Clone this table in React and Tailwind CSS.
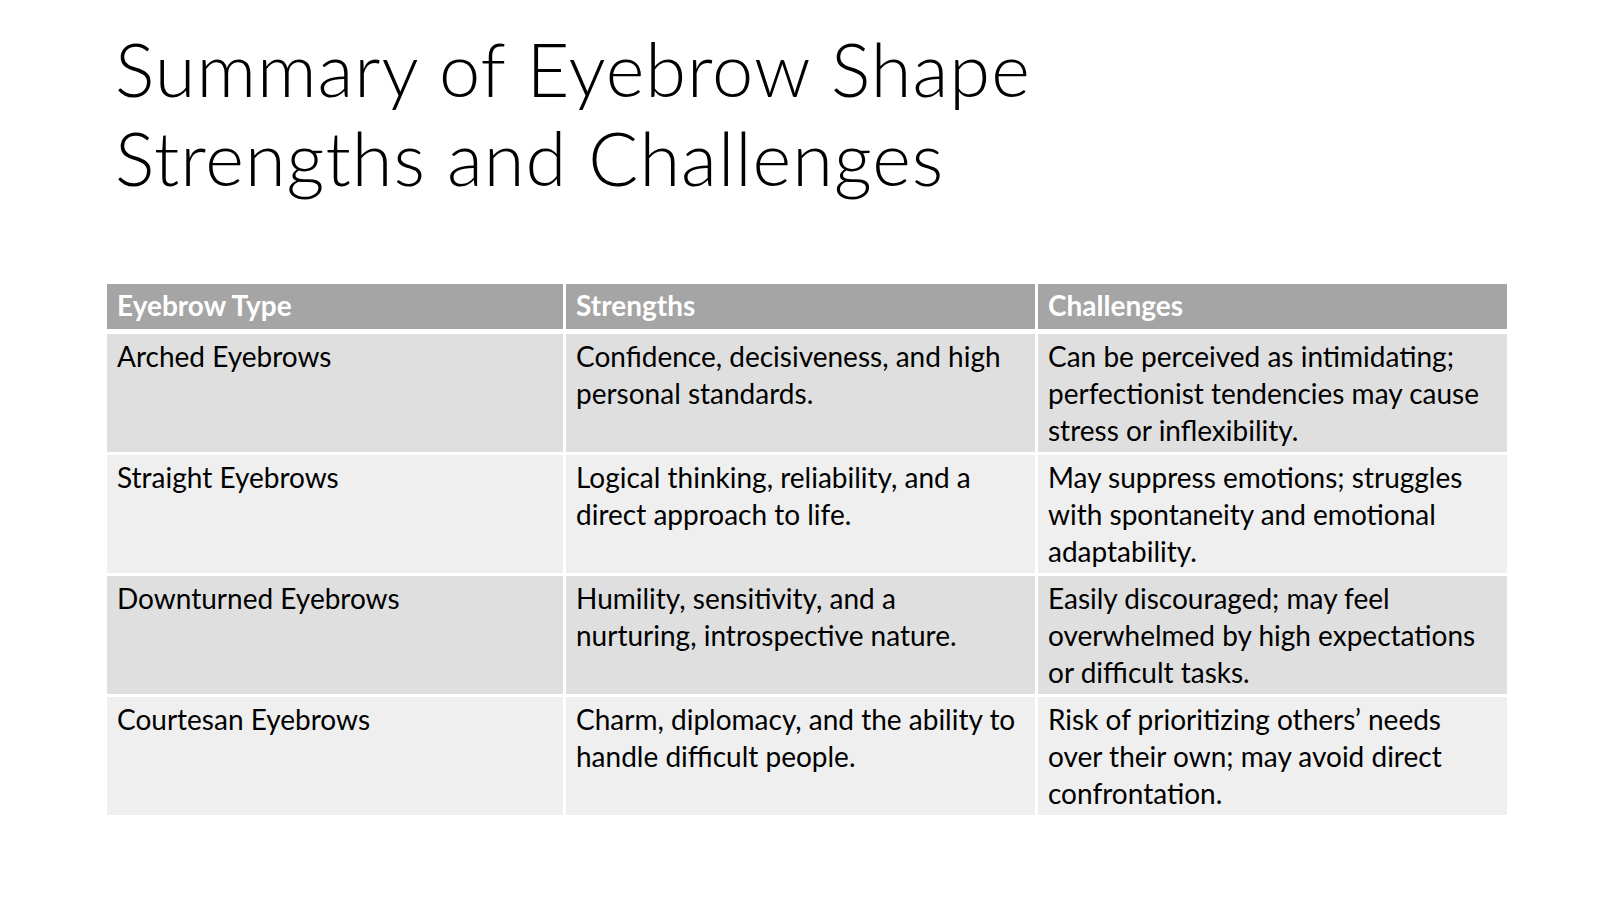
import React from "react";

const rows = [
  {
    type: ["Arched Eyebrows"],
    strengths: ["Confidence, decisiveness, and high", "personal standards."],
    challenges: [
      "Can be perceived as intimidating;",
      "perfectionist tendencies may cause",
      "stress or inflexibility.",
    ],
    bg: "bg-[#dfdfdf]",
  },
  {
    type: ["Straight Eyebrows"],
    strengths: ["Logical thinking, reliability, and a", "direct approach to life."],
    challenges: [
      "May suppress emotions; struggles",
      "with spontaneity and emotional",
      "adaptability.",
    ],
    bg: "bg-[#efefef]",
  },
  {
    type: ["Downturned Eyebrows"],
    strengths: ["Humility, sensitivity, and a", "nurturing, introspective nature."],
    challenges: [
      "Easily discouraged; may feel",
      "overwhelmed by high expectations",
      "or difficult tasks.",
    ],
    bg: "bg-[#dfdfdf]",
  },
  {
    type: ["Courtesan Eyebrows"],
    strengths: ["Charm, diplomacy, and the ability to", "handle difficult people."],
    challenges: [
      "Risk of prioritizing others\u2019 needs",
      "over their own; may avoid direct",
      "confrontation.",
    ],
    bg: "bg-[#efefef]",
  },
];

const Cell = ({ lines, bg }) => (
  <div className={`${bg} pl-[10px] pt-[4px] text-[28px] leading-[37px] text-black`}>
    {lines.map((l) => (
      <div key={l} className="whitespace-nowrap">
        {l}
      </div>
    ))}
  </div>
);

export default function App() {
  return (
    <div
      className="w-[1612px] h-[906px] bg-white overflow-hidden"
      style={{ fontFamily: "Lato, 'Noto Sans', sans-serif" }}
    >
      <h1 className="pl-[115px] pt-[24px] text-[74px] leading-[89px] font-light text-black tracking-[1px] whitespace-nowrap">
        Summary of Eyebrow Shape
        <br />
        Strengths and Challenges
      </h1>

      <div className="ml-[107px] mt-[82px] w-[1400px] flex flex-col">
        <div className="grid grid-cols-[456px_469px_469px] gap-x-[3px] h-[45px]">
          {["Eyebrow Type", "Strengths", "Challenges"].map((h) => (
            <div
              key={h}
              className="bg-[#a5a5a5] pl-[10px] pt-[3px] text-[28px] leading-[37px] font-bold text-white"
            >
              {h}
            </div>
          ))}
        </div>
        <div className="mt-[5px] flex flex-col gap-y-[3px]">
          {rows.map((r) => (
            <div
              key={r.type[0]}
              className="grid grid-cols-[456px_469px_469px] gap-x-[3px] h-[118px]"
            >
              <Cell lines={r.type} bg={r.bg} />
              <Cell lines={r.strengths} bg={r.bg} />
              <Cell lines={r.challenges} bg={r.bg} />
            </div>
          ))}
        </div>
      </div>
    </div>
  );
}
